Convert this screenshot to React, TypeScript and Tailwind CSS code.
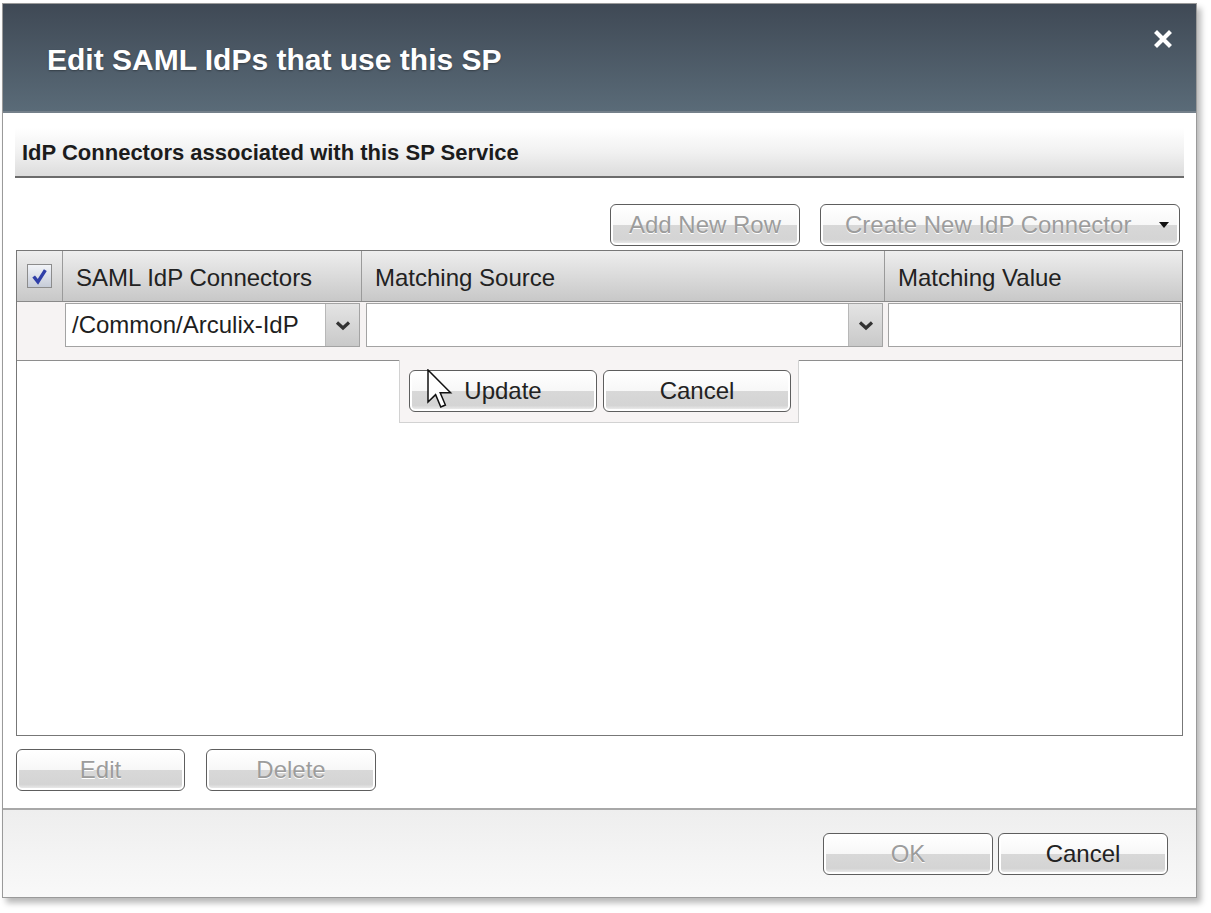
import React from 'react';

type BtnProps = {
  label: string;
  width: string;
  disabled?: boolean;
  children?: React.ReactNode;
};

function Btn({ label, width, disabled, children }: BtnProps) {
  return (
    <div className={`h-[42px] ${width} shrink-0 rounded-[6px] border-[1.5px] border-[#5e5e5e] bg-white p-[2px]`}>
      <div
        className={`flex h-full w-full items-center rounded-[3px] bg-[linear-gradient(to_bottom,#ffffff_0%,#f7f7f7_50%,#d8d8d8_51%,#d4d4d4_90%,#e8e8e8_100%)] text-[24px] leading-none ${
          disabled ? 'text-[#9c9c9c] [text-shadow:0_1px_0_#ffffff]' : 'text-[#222222]'
        } ${children ? 'justify-start' : 'justify-center'}`}
      >
        {children ?? label}
      </div>
    </div>
  );
}

function Chevron() {
  return (
    <svg width="18" height="11" viewBox="0 0 18 11">
      <path d="M3 2.5 L9 8 L15 2.5" stroke="#333" strokeWidth="3.2" fill="none" strokeLinejoin="miter" />
    </svg>
  );
}

function SelectBox({ value, width }: { value?: string; width: string }) {
  return (
    <div className={`flex h-[44px] ${width} shrink-0 border border-[#a3a3a3] bg-white`}>
      <div className="flex flex-1 items-center pl-[6px] text-[24px] text-[#1e1e1e]">{value}</div>
      <div className="flex w-[34px] items-center justify-center border-l border-[#b8b8b8] bg-linear-to-b from-[#e4e4e4] to-[#c9c9c9]">
        <Chevron />
      </div>
    </div>
  );
}

function Cursor() {
  return (
    <svg className="absolute left-[18px] top-[-1px] z-20" width="26" height="40" viewBox="0 0 13 20">
      <path
        d="M0.5 0.5 L0.5 16.5 L4.3 12.8 L6.9 19 L9.2 18 L6.6 11.9 L11.8 11.9 Z"
        fill="#ffffff"
        stroke="#111"
        strokeWidth="0.75"
        strokeLinejoin="miter"
      />
    </svg>
  );
}

export default function App() {
  return (
    <div className="min-h-screen bg-white pl-[2px] pt-[3px] font-['Liberation_Sans',Arial,Helvetica,sans-serif]">
      <div className="flex h-[895px] w-[1195px] flex-col border border-[#9a9a9a] bg-white shadow-[4px_5px_6px_rgba(0,0,0,0.28)]">
        {/* Title bar */}
        <div className="relative flex h-[109px] shrink-0 items-center border-b-2 border-[#74808a] bg-linear-to-b from-[#3f4955] to-[#5a6b78] pl-[44px]">
          <h1 className="pt-[4px] text-[30px] font-bold text-white [text-shadow:0_1px_2px_rgba(0,0,0,0.35)]">
            Edit SAML IdPs that use this SP
          </h1>
          <svg className="absolute right-[23px] top-[25px]" width="20" height="20" viewBox="0 0 20 20">
            <path d="M4 4 L16 16 M16 4 L4 16" stroke="#ffffff" strokeWidth="4.2" strokeLinecap="square" />
          </svg>
        </div>

        {/* Body */}
        <div className="flex flex-1 flex-col px-[12px]">
          <div className="mt-[15px] flex h-[50px] items-center border-b-2 border-[#6b6b6b] bg-linear-to-b from-[#ffffff] via-[#f1f1f1] to-[#dcdcdc] pl-[7px]">
            <span className="text-[22px] font-bold text-[#1c1c1c]">IdP Connectors associated with this SP Service</span>
          </div>

          <div className="mt-[26px] flex justify-end gap-[20px] pr-[4px]">
            <Btn label="Add New Row" width="w-[190px]" disabled />
            <Btn label="Create New IdP Connector" width="w-[360px]" disabled>
              <span className="pl-[22px]">Create New IdP Connector</span>
              <svg className="ml-auto mr-[8px]" width="10" height="6" viewBox="0 0 10 6">
                <path d="M0 0 L10 0 L5 6 Z" fill="#111" />
              </svg>
            </Btn>
          </div>

          {/* Grid */}
          <div className="mx-[1px] mt-[4px] flex h-[486px] flex-col border border-[#777777]">
            <div className="flex h-[51px] shrink-0 border-b border-[#8a8a8a] bg-linear-to-b from-[#eeeeee] to-[#c8c8c8] text-[24px] text-[#222222]">
              <div className="flex w-[46px] items-center justify-center border-r border-[#9a9a9a]">
                <div className="flex h-[24px] w-[25px] items-center justify-center border border-[#8c8c8c] bg-linear-to-b from-[#f2f4f8] to-[#c6ccd8]">
                  <svg width="17" height="17" viewBox="0 0 16 16">
                    <path d="M2.5 8 L6.5 13 L13.5 2" stroke="#2f3fa8" strokeWidth="3.2" fill="none" />
                  </svg>
                </div>
              </div>
              <div className="flex w-[299px] items-center border-r border-[#9a9a9a] pl-[13px] pt-[3px]">SAML IdP Connectors</div>
              <div className="flex w-[523px] items-center border-r border-[#9a9a9a] pl-[13px] pt-[3px]">Matching Source</div>
              <div className="flex flex-1 items-center pl-[13px] pt-[3px]">Matching Value</div>
            </div>

            <div className="relative flex h-[59px] shrink-0 border-b border-[#8e8e8e] bg-[#f6f3f3]">
              <div className="w-[48px] shrink-0" />
              <div className="flex pt-[1px]">
                <SelectBox value="/Common/Arculix-IdP" width="w-[295px]" />
                <div className="w-[6px]" />
                <SelectBox width="w-[517px]" />
                <div className="w-[5px]" />
                <div className="h-[44px] w-[293px] border border-[#a3a3a3] bg-white" />
              </div>

              <div className="absolute left-[382px] top-full z-10 flex h-[63px] w-[400px] gap-[6px] border-x border-b border-[#d2d2d2] bg-[#f7f4f4] pl-[9px] pt-[10px]">
                <div className="relative">
                  <Btn label="Update" width="w-[188px]" />
                  <Cursor />
                </div>
                <Btn label="Cancel" width="w-[188px]" />
              </div>
            </div>

            <div className="flex-1 bg-white" />
          </div>

          <div className="mt-[13px] flex gap-[21px] pl-[1px]">
            <Btn label="Edit" width="w-[169px]" disabled />
            <Btn label="Delete" width="w-[170px]" disabled />
          </div>
        </div>

        {/* Footer */}
        <div className="flex h-[89px] shrink-0 justify-end gap-[5px] border-t-2 border-[#a8a8a8] bg-linear-to-b from-[#eeeeee] to-[#f9f9f9] pr-[28px] pt-[23px]">
          <Btn label="OK" width="w-[170px]" disabled />
          <Btn label="Cancel" width="w-[170px]" />
        </div>
      </div>
    </div>
  );
}
